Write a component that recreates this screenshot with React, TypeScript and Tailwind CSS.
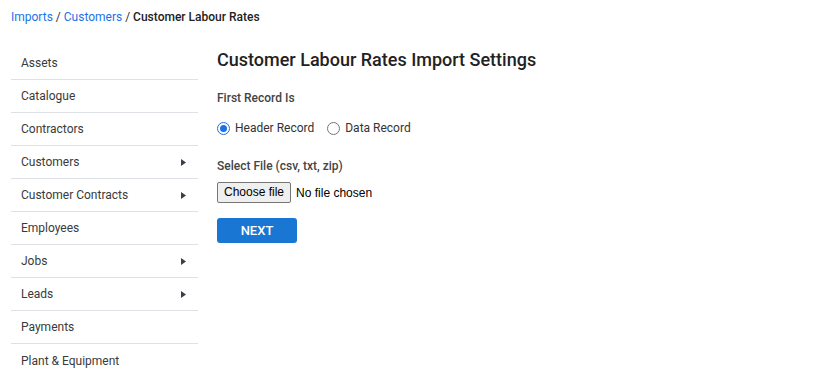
import { useState } from "react";

const menu = [
  { label: "Assets" },
  { label: "Catalogue" },
  { label: "Contractors" },
  { label: "Customers", sub: true },
  { label: "Customer Contracts", sub: true },
  { label: "Employees" },
  { label: "Jobs", sub: true },
  { label: "Leads", sub: true },
  { label: "Payments" },
  { label: "Plant & Equipment" },
];

function Radio({ checked, label, onClick }: { checked: boolean; label: string; onClick: () => void }) {
  return (
    <label className="flex items-center gap-[5px] cursor-pointer" onClick={onClick}>
      <span
        className={`h-[13px] w-[13px] rounded-full border flex items-center justify-center ${
          checked ? "border-[#1a73e8]" : "border-[#767676]"
        }`}
      >
        {checked && <span className="h-[7px] w-[7px] rounded-full bg-[#1a73e8]" />}
      </span>
      <span>{label}</span>
    </label>
  );
}

export default function App() {
  const [first, setFirst] = useState<"header" | "data">("header");

  return (
    <div className="min-h-[372px] bg-white font-['Roboto',sans-serif] text-[#333]">
      <div className="px-[11px] pt-[9px] text-[12px] leading-[16px]">
        <a className="text-[#1a73e8]">Imports</a> / <a className="text-[#1a73e8]">Customers</a> /{" "}
        <span className="font-medium text-[#222]">Customer Labour Rates</span>
      </div>

      <div className="flex gap-[19px] pt-[22px] pl-[11px]">
        <ul className="w-[187px] shrink-0">
          {menu.map((m, i) => (
            <li
              key={m.label}
              className={`flex h-[33px] items-center justify-between pl-[10px] pr-[12px] text-[12px] text-[#3a3a3a] ${
                i < menu.length - 1 ? "border-b border-[#dde1e6]" : ""
              }`}
            >
              <span>{m.label}</span>
              {m.sub && (
                <svg width="5" height="7" viewBox="0 0 5 7">
                  <path d="M0 0 L5 3.5 L0 7 Z" fill="#3a3f4a" />
                </svg>
              )}
            </li>
          ))}
        </ul>

        <div className="pt-[2px]">
          <h1 className="text-[18px] font-medium leading-[22px] text-[#222]">
            Customer Labour Rates Import Settings
          </h1>

          <div className="mt-[19px] text-[12px] font-medium leading-[16px] text-[#444]">First Record Is</div>

          <div className="mt-[14px] flex h-[16px] items-center gap-[13px] text-[12px] text-[#333]">
            <Radio checked={first === "header"} label="Header Record" onClick={() => setFirst("header")} />
            <Radio checked={first === "data"} label="Data Record" onClick={() => setFirst("data")} />
          </div>

          <div className="mt-[22px] text-[12px] font-medium leading-[16px] text-[#444]">
            Select File (csv, txt, zip)
          </div>

          <div className="mt-[8px] flex items-center gap-[5px] font-['Liberation_Sans',Arial,sans-serif] text-[12px] text-black">
            <span className="h-[21px] rounded-[2px] border border-[#767676] bg-[#efefef] px-[6px] leading-[19px]">
              Choose file
            </span>
            <span>No file chosen</span>
          </div>

          <button className="mt-[15px] h-[25px] w-[80px] rounded-[3px] bg-[#1976d2] text-[13px] font-medium text-white">
            NEXT
          </button>
        </div>
      </div>
    </div>
  );
}
